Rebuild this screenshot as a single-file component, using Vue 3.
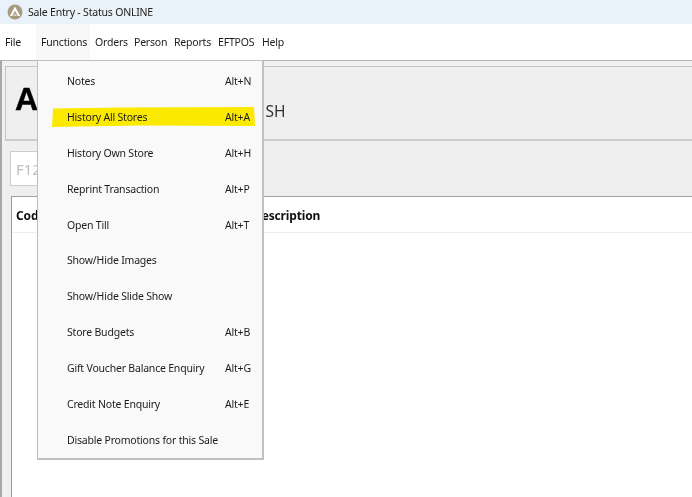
<script setup>
const menus = [
  { label: 'File', w: 36 },
  { label: 'Functions', w: 54, active: true },
  { label: 'Orders', w: 39 },
  { label: 'Person', w: 40 },
  { label: 'Reports', w: 44 },
  { label: 'EFTPOS', w: 44 },
  { label: 'Help', w: 40 },
]
const items = [
  { label: 'Notes', key: 'Alt+N' },
  { label: 'History All Stores', key: 'Alt+A', mark: true },
  { label: 'History Own Store', key: 'Alt+H' },
  { label: 'Reprint Transaction', key: 'Alt+P' },
  { label: 'Open Till', key: 'Alt+T' },
  { label: 'Show/Hide Images', key: '' },
  { label: 'Show/Hide Slide Show', key: '' },
  { label: 'Store Budgets', key: 'Alt+B' },
  { label: 'Gift Voucher Balance Enquiry', key: 'Alt+G' },
  { label: 'Credit Note Enquiry', key: 'Alt+E' },
  { label: 'Disable Promotions for this Sale', key: '' },
]
</script>

<template>
  <div class="window">
    <header class="titlebar">
      <svg class="logo" width="16" height="16" viewBox="0 0 16 16">
        <circle cx="8" cy="8" r="7.5" fill="#a89a80" />
        <path d="M8 2.6 13.2 12H10.8L8 6.8 5.2 12H2.8Z" fill="#fff" />
        <path d="M5.8 12 8 9.6 10.2 12Z" fill="#d8cfc0" />
      </svg>
      <span class="title">Sale Entry - Status ONLINE</span>
    </header>

    <nav class="menubar">
      <span
        v-for="m in menus"
        :key="m.label"
        class="menu-label"
        :class="{ active: m.active }"
        :style="{ width: m.w + 'px' }"
      >{{ m.label }}</span>
    </nav>

    <main class="content">
      <section class="summary">
        <span class="big">A</span>
        <span class="tender">USH</span>
      </section>
      <section class="search">
        <div class="input">F12</div>
      </section>
      <section class="table">
        <div class="thead">
          <span class="col-code">Code</span>
          <span class="col-desc">Description</span>
        </div>
      </section>
    </main>

    <div class="dropdown">
      <div v-for="it in items" :key="it.label" class="item">
        <svg v-if="it.mark" class="marker" width="204" height="22" viewBox="0 0 204 22">
          <path d="M2 2.5 70 1.5 203 1 204 20 90 19.5 1 21Z" fill="#fbe900" />
        </svg>
        <span class="item-label">{{ it.label }}</span>
        <span class="item-key">{{ it.key }}</span>
      </div>
    </div>
  </div>
</template>

<style scoped>
.window {
  position: relative;
  width: 692px;
  height: 497px;
  overflow: hidden;
  display: flex;
  flex-direction: column;
  background: #fff;
  font-family: "Noto Sans", "Open Sans", sans-serif;
  font-size: 10.5px;
  letter-spacing: -0.2px;
  color: #1c1c1c;
  filter: blur(0.3px);
}
.titlebar {
  flex: 0 0 24px;
  display: flex;
  align-items: center;
  padding-left: 7px;
  background: #eaf2f9;
}
.logo {
  margin-right: 5px;
}
.title {
  color: #222;
}
.menubar {
  flex: 0 0 36px;
  display: flex;
  background: #fff;
}
.menu-label {
  box-sizing: border-box;
  display: flex;
  align-items: center;
  padding-left: 5px;
  white-space: nowrap;
}
.menu-label.active {
  background: #f8f8f8;
}
.content {
  flex: 1;
  min-height: 0;
  display: flex;
  flex-direction: column;
  padding: 5px 0 0 5px;
  border-top: 1px solid #b4b4b4;
  border-left: 2px solid #a8a8a8;
  background: #f0f0f0;
}
.summary {
  flex: 0 0 75px;
  box-sizing: border-box;
  display: flex;
  margin-left: -2px;
  border: 1px solid #c4c4c4;
  border-bottom: 2px solid #cccccc;
  border-right: 0;
  background: #efefef;
}
.big {
  margin: 12px 0 0 9px;
  font-family: "Liberation Sans", Arial, sans-serif;
  font-weight: 700;
  font-size: 32px;
  line-height: 40px;
  letter-spacing: 0;
  color: #000;
  -webkit-text-stroke: 0.4px #000;
}
.tender {
  margin: 33px 0 0 216px;
  font-size: 15.5px;
  line-height: 22px;
  letter-spacing: 0;
  color: #30343a;
}
.search {
  flex: 0 0 55px;
  box-sizing: border-box;
  margin-left: -2px;
  padding: 10px 0 0 5px;
  background: #efefef;
}
.input {
  box-sizing: border-box;
  width: 220px;
  height: 35px;
  display: flex;
  align-items: center;
  padding-left: 5px;
  border: 1px solid #cccccc;
  background: #fff;
  font-size: 15px;
  letter-spacing: 0;
  color: #c0c0c0;
}
.table {
  flex: 1;
  margin-left: 4px;
  border-top: 1px solid #9ca3a8;
  border-left: 1px solid #9a9a9a;
  background: #fff;
}
.thead {
  height: 36px;
  box-sizing: border-box;
  padding-top: 2px;
  display: flex;
  align-items: center;
  border-bottom: 1px solid #eeeeee;
  font-size: 12px;
  font-weight: 700;
  letter-spacing: -0.15px;
  color: #111;
}
.col-code {
  width: 241px;
  padding-left: 4px;
  box-sizing: border-box;
}
.dropdown {
  position: absolute;
  left: 37px;
  top: 60px;
  width: 227px;
  height: 400px;
  box-sizing: border-box;
  padding: 2px 0;
  background: #f9f9f9;
  border: 1px solid #c0c0c0;
  border-right-width: 2px;
  border-bottom-width: 2px;
}
.item {
  position: relative;
  height: 35.9px;
  display: flex;
  align-items: center;
  justify-content: space-between;
  padding: 0 9px 0 29px;
}
.marker {
  position: absolute;
  left: 13px;
  top: 7px;
}
.item-label,
.item-key {
  position: relative;
  white-space: nowrap;
}
.item-key {
  width: 28px;
}
</style>
